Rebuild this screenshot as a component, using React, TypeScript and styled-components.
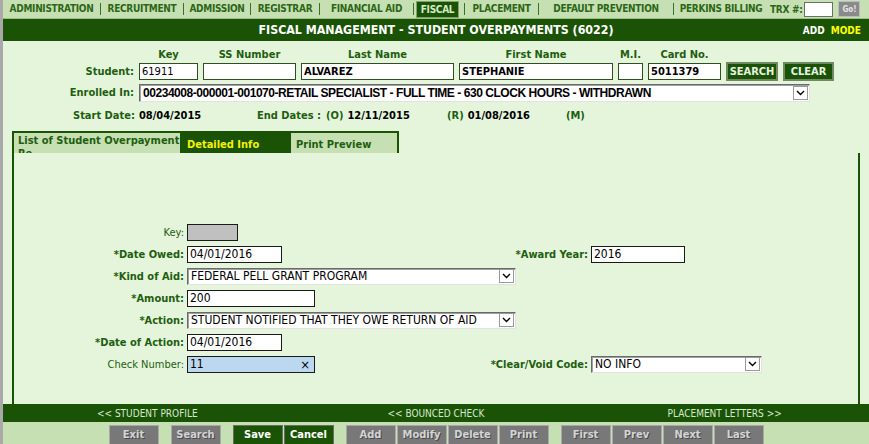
import { Fragment } from "react";
import styled, { createGlobalStyle } from "styled-components";

const GREEN = "#1b5306";
const NAV_BG = "#c6e0b4";
const BG = "#e4f5dc";
const LABEL = "#1f5e0f";
const FONT = `"DejaVu Sans Condensed", "DejaVu Sans", sans-serif`;

const GlobalStyle = createGlobalStyle`
  html, body {
    margin: 0;
    padding: 0;
    background: ${BG};
  }
  body {
    font-family: ${FONT};
  }
  * {
    box-sizing: border-box;
  }
`;

const Page = styled.div`
  width: 869px;
  height: 444px;
  display: flex;
  flex-direction: column;
  border-left: 3px solid #a9a9a9;
  background: ${BG};
  overflow: hidden;
`;

/* ---------- top navigation ---------- */

const NavBar = styled.nav`
  height: 19px;
  display: flex;
  align-items: center;
  background: ${NAV_BG};
  border-bottom: 1px solid #9cbf88;
  font-size: 10px;
  font-weight: bold;
  letter-spacing: -0.3px;
  color: #2c6716;
`;

const NavItem = styled.div<{ $w: number; $active?: boolean }>`
  width: ${(p) => p.$w}px;
  height: 17px;
  line-height: 15px;
  text-align: center;
  white-space: nowrap;
  ${(p) =>
    p.$active &&
    `
    margin-left: 2px;
    background: ${GREEN};
    color: #d3ebc6;
    border: 1px solid #7fa56b;
  `}
`;

const NavSep = styled.span<{ $ml?: number }>`
  width: 1px;
  height: 12px;
  margin-left: ${(p) => p.$ml ?? 0}px;
  background: #3c6f2a;
`;

const TrxLabel = styled.span`
  margin-left: 2px;
  white-space: nowrap;
`;

const TrxInput = styled.input`
  width: 29px;
  height: 15px;
  margin-left: 2px;
  padding: 0;
  border: 1px solid #6d6d6d;
  background: #fff;
`;

const GoButton = styled.button`
  width: 22px;
  height: 16px;
  margin-left: 5px;
  padding: 0;
  border: 1px solid #bdbdbd;
  background: #8a8a8a;
  color: #e4e4e4;
  font-family: ${FONT};
  font-size: 8px;
  font-weight: bold;
`;

/* ---------- title ---------- */

const TitleBar = styled.header`
  height: 22px;
  display: grid;
  grid-template-columns: 1fr auto 1fr;
  align-items: center;
  background: ${GREEN};
  color: #fff;
  font-weight: bold;
`;

const Title = styled.h1`
  grid-column: 2;
  margin: 0;
  font-size: 12.3px;
`;

const ModeTag = styled.div`
  justify-self: end;
  padding-right: 8px;
  font-size: 10px;
  span {
    margin-left: 6px;
    color: #ffff00;
  }
`;

/* ---------- student header ---------- */

const StudentGrid = styled.div`
  display: grid;
  grid-template-columns: 131px 59px 93px 153px 154px 25px 73px 52px 51px;
  grid-template-rows: 16px 19px 22px;
  column-gap: 5px;
  align-items: center;
  padding-top: 5px;
  font-size: 11px;
`;

const ColHead = styled.div`
  text-align: center;
  font-weight: bold;
  color: ${LABEL};
`;

const RowLabel = styled.div`
  text-align: right;
  font-weight: bold;
  color: ${LABEL};
  white-space: nowrap;
`;

const StudentInput = styled.input<{ $bold?: boolean }>`
  width: 100%;
  height: 17px;
  padding: 0 2px;
  border: 1px solid #2e4f20;
  background: #fff;
  font-family: ${FONT};
  font-size: 11px;
  font-weight: ${(p) => (p.$bold ? "bold" : "normal")};
  color: #000;
`;

const HeadButton = styled.button`
  width: 100%;
  height: 19px;
  padding: 0;
  border: 2px solid #6f8a63;
  background: ${GREEN};
  color: #e6f2e0;
  font-family: ${FONT};
  font-size: 11px;
  font-weight: bold;
`;

const EnrollRow = styled.div`
  grid-column: 2 / -1;
  align-self: end;
  margin-bottom: 1px;
`;

/* ---------- selects ---------- */

const SelectBox = styled.div<{ $w: number; $h?: number }>`
  width: ${(p) => p.$w}px;
  height: ${(p) => p.$h ?? 17}px;
  display: flex;
  align-items: center;
  border: 1px solid;
  border-color: #6a6a6a #e2e2e2 #e2e2e2 #6a6a6a;
  box-shadow: inset 1px 1px 0 #a0a0a0;
  background: #fff;
`;

const SelectText = styled.span<{ $narrow?: boolean }>`
  flex: 1;
  padding-left: 3px;
  white-space: nowrap;
  overflow: hidden;
  color: #000;
  font-family: ${(p) =>
    p.$narrow ? `"Liberation Sans Narrow", "Liberation Sans", sans-serif` : FONT};
  font-size: 12px;
  font-weight: ${(p) => (p.$narrow ? "bold" : "normal")};
  letter-spacing: ${(p) => (p.$narrow ? "-0.45px" : "normal")};
`;

const ArrowBox = styled.span`
  width: 15px;
  height: 14px;
  margin-right: 1px;
  display: flex;
  align-items: center;
  justify-content: center;
  border: 1px solid #9a9a9a;
  background: #fff;
`;

function Select({
  w,
  h,
  value,
  narrow,
  className,
}: {
  w: number;
  h?: number;
  value: string;
  narrow?: boolean;
  className?: string;
}) {
  return (
    <SelectBox $w={w} $h={h} className={className}>
      <SelectText $narrow={narrow}>{value}</SelectText>
      <ArrowBox>
        <svg width="9" height="6" viewBox="0 0 9 6">
          <path d="M1 1 L4.5 4.5 L8 1" fill="none" stroke="#000" strokeWidth="1.4" />
        </svg>
      </ArrowBox>
    </SelectBox>
  );
}

/* ---------- dates ---------- */

const DatesRow = styled.div`
  height: 24px;
  display: grid;
  grid-template-columns: 184px 190px 119px auto;
  align-items: center;
  padding-left: 70px;
  font-size: 11px;
  font-weight: bold;
  color: ${LABEL};
  b {
    color: #000;
    margin-left: 4px;
  }
  i {
    font-style: normal;
    margin-left: 5px;
  }
`;

/* ---------- tabs ---------- */

const TabStrip = styled.div`
  display: flex;
  height: 22px;
  margin: 4px 0 0 9px;
`;

const Tab = styled.div<{ $w: number; $active?: boolean; $first?: boolean }>`
  width: ${(p) => p.$w}px;
  height: 22px;
  overflow: hidden;
  padding: ${(p) => (p.$first ? "1px 0 0 4px" : "5px 0 0 5px")};
  border-top: 2px solid ${GREEN};
  border-right: 2px solid ${GREEN};
  border-left: ${(p) => (p.$first ? `2px solid ${GREEN}` : "none")};
  background: ${(p) => (p.$active ? GREEN : NAV_BG)};
  color: ${(p) => (p.$active ? "#f2f200" : LABEL)};
  font-size: 11px;
  font-weight: bold;
  line-height: 13px;
`;

/* ---------- detail panel ---------- */

const Panel = styled.section`
  flex: 1;
  margin: 0 9px 0 9px;
  border-left: 2px solid ${GREEN};
  border-right: 2px solid ${GREEN};
  padding-top: 68px;
`;

const FormGrid = styled.div`
  display: grid;
  grid-template-columns: 173px 138px 266px 1fr;
  grid-auto-rows: 22px;
  align-items: center;
  font-size: 11px;
`;

const FieldLabel = styled.label<{ $right?: boolean; $plain?: boolean }>`
  grid-column: ${(p) => (p.$right ? 3 : 1)};
  padding-right: 3px;
  text-align: right;
  white-space: nowrap;
  color: ${LABEL};
  font-weight: ${(p) => (p.$plain ? "normal" : "bold")};
`;

const Field = styled.input<{ $w: number; $disabled?: boolean }>`
  width: ${(p) => p.$w}px;
  height: 17px;
  padding: 0 2px;
  border: 1px solid #1a1a1a;
  background: ${(p) => (p.$disabled ? "#c0c0c0" : "#fff")};
  font-family: ${FONT};
  font-size: 12px;
  color: #000;
`;

const WideSelect = styled(Select)`
  grid-column: span 2;
`;

const ClearField = styled.div<{ $w: number }>`
  width: ${(p) => p.$w}px;
  height: 17px;
  display: flex;
  align-items: center;
  justify-content: space-between;
  padding: 0 4px 0 2px;
  border: 1px solid #1a1a1a;
  background: #bcd8f0;
  font-size: 12px;
  color: #000;
  span {
    font-size: 13px;
  }
`;

/* ---------- bottom ---------- */

const LinkBar = styled.div`
  height: 18px;
  display: grid;
  grid-template-columns: repeat(3, 1fr);
  align-items: center;
  background: ${GREEN};
  color: #d6e9ce;
  font-size: 10px;
  text-align: center;
`;

const ButtonRow = styled.div`
  height: 22px;
  display: flex;
  justify-content: center;
  gap: 12px;
  padding-top: 3px;
  background: ${NAV_BG};
`;

const ButtonGroup = styled.div`
  display: flex;
  gap: 1px;
`;

const ActionButton = styled.button<{ $primary?: boolean }>`
  width: 50px;
  height: 21px;
  padding: 0 0 2px;
  border: 1px solid ${(p) => (p.$primary ? "#6b6b6b" : "#a8a8a8")};
  background: ${(p) => (p.$primary ? GREEN : "#787878")};
  color: ${(p) => (p.$primary ? "#ffffff" : "#d4d4d4")};
  text-shadow: ${(p) => (p.$primary ? "none" : "1px 1px 0 #4a4a4a")};
  font-family: ${FONT};
  font-size: 11px;
  font-weight: bold;
`;

const navItems: { label: string; w: number }[] = [
  { label: "ADMINISTRATION", w: 97 },
  { label: "RECRUITMENT", w: 82 },
  { label: "ADMISSION", w: 66 },
  { label: "REGISTRAR", w: 68 },
  { label: "FINANCIAL AID", w: 93 },
];

const buttonGroups: { label: string; primary?: boolean }[][] = [
  [{ label: "Exit" }],
  [{ label: "Search" }],
  [
    { label: "Save", primary: true },
    { label: "Cancel", primary: true },
  ],
  [{ label: "Add" }, { label: "Modify" }, { label: "Delete" }, { label: "Print" }],
  [{ label: "First" }, { label: "Prev" }, { label: "Next" }, { label: "Last" }],
];

function App() {
  return (
    <>
      <GlobalStyle />
      <Page>
        <NavBar>
          {navItems.map((item) => (
            <Fragment key={item.label}>
              <NavItem $w={item.w}>{item.label}</NavItem>
              <NavSep />
            </Fragment>
          ))}
          <NavItem $w={43} $active>
            FISCAL
          </NavItem>
          <NavSep $ml={5} />
          <NavItem $w={73}>PLACEMENT</NavItem>
          <NavSep />
          <NavItem $w={134}>DEFAULT PREVENTION</NavItem>
          <NavSep />
          <NavItem $w={94}>PERKINS BILLING</NavItem>
          <TrxLabel>TRX #:</TrxLabel>
          <TrxInput readOnly />
          <GoButton>Go!</GoButton>
        </NavBar>

        <TitleBar>
          <Title>FISCAL MANAGEMENT - STUDENT OVERPAYMENTS (6022)</Title>
          <ModeTag>
            ADD<span>MODE</span>
          </ModeTag>
        </TitleBar>

        <StudentGrid>
          <div />
          <ColHead>Key</ColHead>
          <ColHead>SS Number</ColHead>
          <ColHead>Last Name</ColHead>
          <ColHead>First Name</ColHead>
          <ColHead>M.I.</ColHead>
          <ColHead>Card No.</ColHead>
          <div />
          <div />

          <RowLabel>Student:</RowLabel>
          <StudentInput readOnly value="61911" />
          <StudentInput readOnly value="" />
          <StudentInput readOnly $bold value="ALVAREZ" />
          <StudentInput readOnly $bold value="STEPHANIE" />
          <StudentInput readOnly value="" />
          <StudentInput readOnly $bold value="5011379" />
          <HeadButton>SEARCH</HeadButton>
          <HeadButton>CLEAR</HeadButton>

          <RowLabel>Enrolled In:</RowLabel>
          <EnrollRow>
            <Select
              w={671}
              h={18}
              narrow
              value="00234008-000001-001070-RETAIL SPECIALIST - FULL TIME - 630 CLOCK HOURS - WITHDRAWN"
            />
          </EnrollRow>
        </StudentGrid>

        <DatesRow>
          <div>
            Start Date:<b>08/04/2015</b>
          </div>
          <div>
            End Dates :<i>(O)</i>
            <b>12/11/2015</b>
          </div>
          <div>
            (R)<b>01/08/2016</b>
          </div>
          <div>(M)</div>
        </DatesRow>

        <TabStrip>
          <Tab $w={170} $first>
            List of Student Overpayment Re...
          </Tab>
          <Tab $w={109} $active>
            Detailed Info
          </Tab>
          <Tab $w={108}>Print Preview</Tab>
        </TabStrip>

        <Panel>
          <FormGrid>
            <FieldLabel $plain>Key:</FieldLabel>
            <Field $w={51} $disabled readOnly value="" />

            <FieldLabel>*Date Owed:</FieldLabel>
            <Field $w={95} readOnly value="04/01/2016" />
            <FieldLabel $right>*Award Year:</FieldLabel>
            <Field $w={94} readOnly value="2016" />

            <FieldLabel>*Kind of Aid:</FieldLabel>
            <WideSelect w={329} value="FEDERAL PELL GRANT PROGRAM" />

            <FieldLabel>*Amount:</FieldLabel>
            <Field $w={128} readOnly value="200" />

            <FieldLabel>*Action:</FieldLabel>
            <WideSelect w={329} value="STUDENT NOTIFIED THAT THEY OWE RETURN OF AID" />

            <FieldLabel>*Date of Action:</FieldLabel>
            <Field $w={95} readOnly value="04/01/2016" />

            <FieldLabel $plain>Check Number:</FieldLabel>
            <ClearField $w={128}>
              11<span>×</span>
            </ClearField>
            <FieldLabel $right>*Clear/Void Code:</FieldLabel>
            <Select w={171} value="NO INFO" />
          </FormGrid>
        </Panel>

        <LinkBar>
          <span>&lt;&lt; STUDENT PROFILE</span>
          <span>&lt;&lt; BOUNCED CHECK</span>
          <span>PLACEMENT LETTERS &gt;&gt;</span>
        </LinkBar>

        <ButtonRow>
          {buttonGroups.map((group, i) => (
            <ButtonGroup key={i}>
              {group.map((b) => (
                <ActionButton key={b.label} $primary={b.primary}>
                  {b.label}
                </ActionButton>
              ))}
            </ButtonGroup>
          ))}
        </ButtonRow>
      </Page>
    </>
  );
}

export default App;
